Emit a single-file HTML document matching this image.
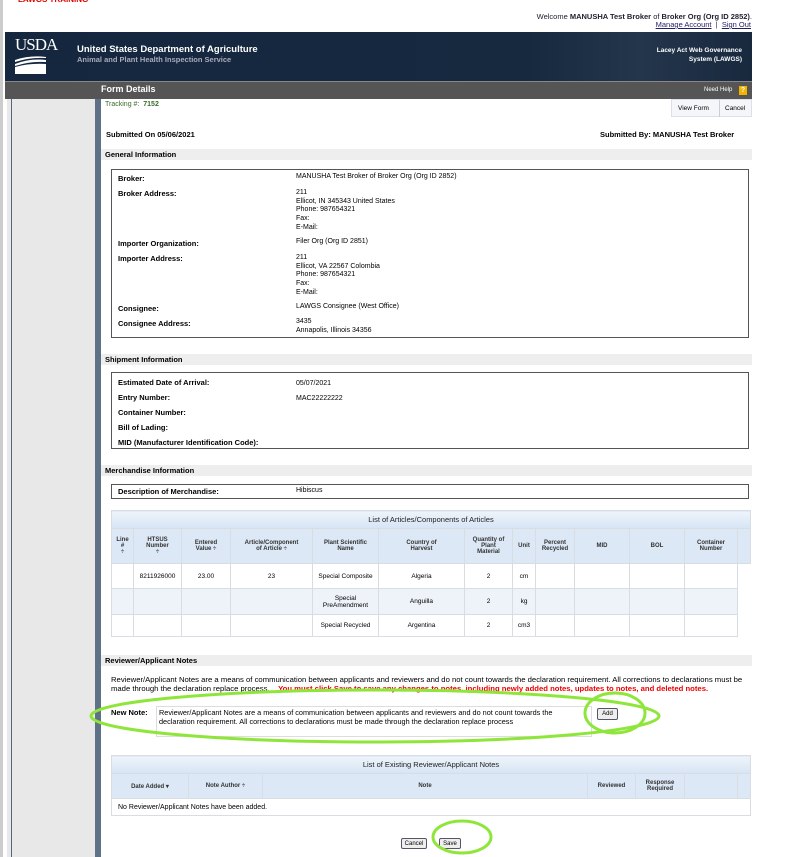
<!DOCTYPE html>
<html><head><meta charset="utf-8">
<style>
*{margin:0;padding:0;box-sizing:border-box}
body{width:797px;height:857px;overflow:hidden;background:#fff;font-family:"Liberation Sans",Arial,sans-serif;font-size:7.5px;color:#000;position:relative}
.a{position:absolute;white-space:nowrap}
.b{font-weight:bold}
.bar{position:absolute;left:101px;width:651px;height:11px;background:#eee;font-weight:bold;font-size:7.5px;padding:1px 4px;line-height:9px}
.box{position:absolute;left:111px;width:638px;border:1px solid #555}
table{border-collapse:collapse;position:absolute;font-size:6.5px}
td,th{border:1px solid #d8dde3;text-align:center;vertical-align:middle;font-weight:normal}
th{background:#dce8f6;font-weight:bold;color:#333;font-size:6px}
.ttl{background:linear-gradient(#eef4fb,#d6e4f4);font-size:7.5px;font-weight:normal;color:#222}
.btn{position:absolute;border:1px solid #556;border-radius:2px;background:#eee;font-size:6px;text-align:center;line-height:10px}
</style></head><body>
<div class="a" style="left:0;top:0;width:3px;height:857px;background:#ccc"></div>
<div class="a" style="left:18px;top:-5px;color:#d00;font-weight:bold;font-size:8px">LAWGS TRAINING</div>
<div class="a" style="right:45px;top:12px;font-size:7.5px;color:#223">Welcome <b>MANUSHA Test Broker</b> of <b>Broker Org (Org ID 2852)</b>.</div>
<div class="a" style="right:46px;top:20px;font-size:7.5px;color:#226"><u>Manage Account</u> &nbsp;|&nbsp; <u>Sign Out</u></div>
<div class="a" style="left:5px;top:32px;width:747px;height:49px;background:linear-gradient(90deg,#15273f 0%,#17293f 70%,#24364c 85%,#18293e 100%)"></div>
<div class="a" style="left:15px;top:36px;color:#fff;font-family:'Liberation Serif',serif;font-size:17px;letter-spacing:-1px;line-height:18px">USDA</div>
<svg class="a" style="left:15px;top:54px" width="31" height="20"><path d="M0 6 Q15 1 31 3 L31 4 Q15 3 0 8Z M0 10 Q15 4 31 6 L31 8 Q15 7 0 12Z" fill="#fff"/><path d="M0 13 Q15 9 31 10 L31 20 L0 20Z" fill="#fff"/></svg>
<div class="a b" style="left:77px;top:44px;color:#fff;font-size:9.5px">United States Department of Agriculture</div>
<div class="a b" style="left:77px;top:55px;color:#aab;font-size:7.5px">Animal and Plant Health Inspection Service</div>
<div class="a b" style="right:55px;top:46px;color:#fff;font-size:6.5px;text-align:right;line-height:9px">Lacey Act Web Governance<br>System (LAWGS)</div>
<div class="a" style="left:5px;top:81px;width:747px;height:18px;background:#555;border-top:1px solid #888"></div>
<div class="a" style="left:101px;top:84px;color:#fff;font-size:9px;font-weight:bold">Form Details</div>
<div class="a" style="left:704px;top:87px;color:#fff;font-size:6px">Need Help</div>
<div class="a" style="left:739px;top:86px;width:8px;height:9px;background:#f0b400;color:#fff;font-size:7px;text-align:center;font-weight:bold;line-height:9px">?</div>
<div class="a" style="left:7px;top:99px;width:88px;height:758px;background:#e8e8e8"></div>
<div class="a" style="left:11px;top:99px;width:1px;height:758px;background:#567"></div>
<div class="a" style="left:95px;top:99px;width:6px;height:758px;background:#5f7186"></div>
<div class="a" style="left:105px;top:101px;color:#3a6a2a;font-size:7px">Tracking #: &nbsp;<b>7152</b></div>
<div class="a" style="left:671px;top:99px;width:81px;height:18px;background:#f4f6f9;border:1px solid #dde;font-size:6.5px;line-height:17px"><span style="padding-left:6px">View Form</span><span style="position:absolute;left:47px;top:0;height:17px;border-left:1px solid #ccd;padding-left:5px">Cancel</span></div>
<div class="a b" style="left:106px;top:130px">Submitted On 05/06/2021</div>
<div class="a b" style="left:600px;top:130px">Submitted By: MANUSHA Test Broker</div>

<div class="bar" style="top:149px">General Information</div>
<div class="box" style="top:169px;height:169px"></div>
<div class="a b" style="left:118px;top:171px;line-height:15px">Broker:<br>Broker Address:</div>
<div class="a b" style="left:118px;top:236px;line-height:15px">Importer Organization:<br>Importer Address:</div>
<div class="a b" style="left:118px;top:301px;line-height:15px">Consignee:<br>Consignee Address:</div>
<div class="a" style="left:296px;top:173px;font-size:7px">MANUSHA Test Broker of Broker Org (Org ID 2852)</div>
<div class="a" style="left:296px;top:189px;font-size:7px;line-height:8.7px">211<br>Ellicot, IN 345343 United States<br>Phone: 987654321<br>Fax:<br>E-Mail:</div>
<div class="a" style="left:296px;top:238px;font-size:7px">Filer Org (Org ID 2851)</div>
<div class="a" style="left:296px;top:254px;font-size:7px;line-height:8.7px">211<br>Ellicot, VA 22567 Colombia<br>Phone: 987654321<br>Fax:<br>E-Mail:</div>
<div class="a" style="left:296px;top:303px;font-size:7px">LAWGS Consignee (West Office)</div>
<div class="a" style="left:296px;top:318px;font-size:7px;line-height:8.7px">3435<br>Annapolis, Illinois 34356</div>

<div class="bar" style="top:354px">Shipment Information</div>
<div class="box" style="top:372px;height:77px"></div>
<div class="a b" style="left:118px;top:375px;line-height:15px">Estimated Date of Arrival:<br>Entry Number:<br>Container Number:<br>Bill of Lading:<br>MID (Manufacturer Identification Code):</div>
<div class="a" style="left:296px;top:376px;line-height:15px;font-size:7px">05/07/2021<br>MAC22222222</div>

<div class="bar" style="top:465px">Merchandise Information</div>
<div class="box" style="top:484px;height:15px"></div>
<div class="a b" style="left:118px;top:487px">Description of Merchandise:</div>
<div class="a" style="left:296px;top:487px;font-size:7px">Hibiscus</div>

<table style="left:111px;top:510px;width:640px">
<tr style="height:18px"><th colspan="14" class="ttl">List of Articles/Components of Articles</th></tr>
<tr style="height:35px"><th style="width:22px">Line<br>#<br>÷</th><th style="width:48px">HTSUS<br>Number<br>÷</th><th style="width:49px">Entered<br>Value ÷</th><th style="width:82px">Article/Component<br>of Article ÷</th><th style="width:66px">Plant Scientific<br>Name</th><th style="width:86px">Country of<br>Harvest</th><th style="width:48px">Quantity of<br>Plant<br>Material</th><th style="width:23px">Unit</th><th style="width:39px">Percent<br>Recycled</th><th style="width:55px">MID</th><th style="width:55px">BOL</th><th style="width:53px">Container<br>Number</th><th></th></tr>
<tr style="height:25px"><td></td><td>8211926000</td><td>23.00</td><td>23</td><td>Special Composite</td><td>Algeria</td><td>2</td><td>cm</td><td></td><td></td><td></td><td></td><td style="border:none"></td></tr>
<tr style="height:26px;background:#eef3f9"><td></td><td></td><td></td><td></td><td>Special<br>PreAmendment</td><td>Anguilla</td><td>2</td><td>kg</td><td></td><td></td><td></td><td></td><td style="border:none;background:#fff"></td></tr>
<tr style="height:22px"><td></td><td></td><td></td><td></td><td>Special Recycled</td><td>Argentina</td><td>2</td><td>cm3</td><td></td><td></td><td></td><td></td><td style="border:none"></td></tr>
</table>

<div class="bar" style="top:655px">Reviewer/Applicant Notes</div>
<div class="a" style="left:111px;top:675px;font-size:7.7px;line-height:9px">Reviewer/Applicant Notes are a means of communication between applicants and reviewers and do not count towards the declaration requirement. All corrections to declarations must be<br>made through the declaration replace process. &nbsp;&nbsp;&nbsp;<b style="color:#e00">You must click Save to save any changes to notes, including newly added notes, updates to notes, and deleted notes.</b></div>
<div class="a b" style="left:111px;top:708px">New Note:</div>
<div class="a" style="left:156px;top:706px;width:436px;height:31px;border:1px solid #ddd;font-size:7.3px;line-height:9px;padding:1px 2px;white-space:normal">Reviewer/Applicant Notes are a means of communication between applicants and reviewers and do not count towards the declaration requirement. All corrections to declarations must be made through the declaration replace process</div>
<div class="btn" style="left:597px;top:708px;width:21px;height:12px">Add</div>
<svg class="a" style="left:85px;top:685px" width="580" height="62"><ellipse cx="290" cy="31" rx="284" ry="26" fill="none" stroke="#8fe63a" stroke-width="3"/><ellipse cx="530" cy="28" rx="30" ry="20" fill="none" stroke="#8fe63a" stroke-width="3"/></svg>

<table style="left:111px;top:755px;width:640px">
<tr style="height:18px"><th colspan="7" class="ttl">List of Existing Reviewer/Applicant Notes</th></tr>
<tr style="height:25px"><th style="width:77px">Date Added ▾</th><th style="width:74px">Note Author ÷</th><th style="width:325px">Note</th><th style="width:48px">Reviewed</th><th style="width:49px">Response<br>Required</th><th style="width:53px"></th><th></th></tr>
<tr style="height:17px"><td colspan="7" style="text-align:left;padding-left:6px;font-size:7px">No Reviewer/Applicant Notes have been added.</td></tr>
</table>
<div class="btn" style="left:401px;top:838px;width:26px;height:11px">Cancel</div>
<div class="btn" style="left:439px;top:838px;width:22px;height:11px">Save</div>
<svg class="a" style="left:428px;top:818px" width="68" height="39"><ellipse cx="34" cy="19" rx="29" ry="16" fill="none" stroke="#8fe63a" stroke-width="3"/></svg>
</body></html>
